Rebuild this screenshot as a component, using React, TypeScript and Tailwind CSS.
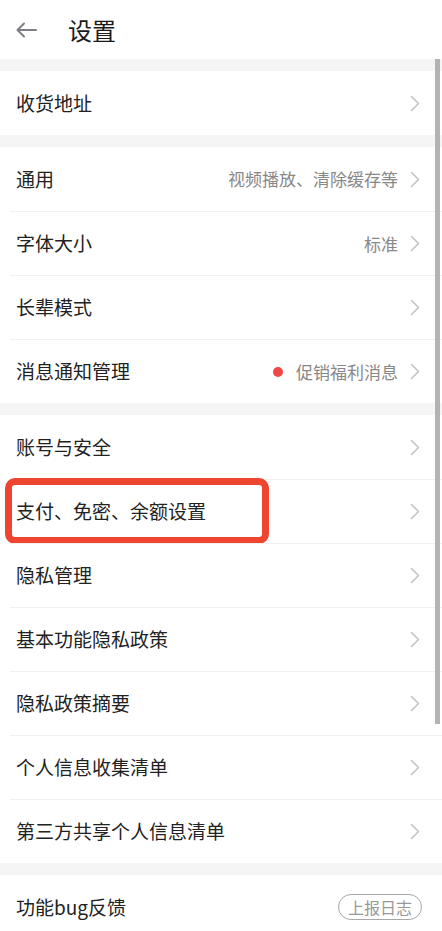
import React from "react";

type Row = {
  label: string;
  value?: string;
  dot?: boolean;
  highlight?: boolean;
};

const groups: Row[][] = [
  [{ label: "收货地址" }],
  [
    { label: "通用", value: "视频播放、清除缓存等" },
    { label: "字体大小", value: "标准" },
    { label: "长辈模式" },
    { label: "消息通知管理", value: "促销福利消息", dot: true },
  ],
  [
    { label: "账号与安全" },
    { label: "支付、免密、余额设置", highlight: true },
    { label: "隐私管理" },
    { label: "基本功能隐私政策" },
    { label: "隐私政策摘要" },
    { label: "个人信息收集清单" },
    { label: "第三方共享个人信息清单" },
  ],
];

function Chevron() {
  return (
    <svg width="10" height="17" viewBox="0 0 10 17" fill="none">
      <path
        d="M1.5 1.5 L8.5 8.5 L1.5 15.5"
        stroke="#c4c4c4"
        strokeWidth="1.6"
        strokeLinecap="round"
        strokeLinejoin="round"
      />
    </svg>
  );
}

function SettingRow({ row, first }: { row: Row; first: boolean }) {
  return (
    <div className="relative pl-[10px]">
      <div
        className={`flex h-[64px] items-center pl-[6px] pr-[22px] ${
          first ? "" : "border-t border-[#f0f0f0]"
        }`}
      >
        <span className="flex-1 text-[19px] text-[#222]">{row.label}</span>
        {row.dot && (
          <span className="mr-[13px] h-[10px] w-[10px] rounded-full bg-[#f04848]" />
        )}
        {row.value && (
          <span className="mr-[12px] text-[17px] text-[#888]">{row.value}</span>
        )}
        <Chevron />
      </div>
      {/* 红框标注 */}
      {row.highlight && (
        <div className="absolute left-[5px] top-[-1px] h-[66px] w-[264px] rounded-[10px] border-[7px] border-[#ee4430]" />
      )}
    </div>
  );
}

export default function App() {
  return (
    <div
      className="relative h-[931px] w-full overflow-hidden bg-[#f5f5f5]"
      style={{ fontFamily: '"Noto Sans CJK SC", "Noto Sans", sans-serif' }}
    >
      {/* Header */}
      <div className="flex h-[59px] items-center bg-white pl-[16px]">
        <svg width="21" height="16" viewBox="0 0 21 16" fill="none">
          <path
            d="M1.5 8 H20 M8 1.5 L1.5 8 L8 14.5"
            stroke="#7e7e86"
            strokeWidth="2"
            strokeLinecap="round"
            strokeLinejoin="round"
          />
        </svg>
        <span className="ml-[31px] text-[24px] text-[#1a1a1a]">设置</span>
      </div>

      <div className="flex flex-col gap-[12px] pt-[12px]">
        {groups.map((g, gi) => (
          <div key={gi} className="bg-white">
            {g.map((row, i) => (
              <SettingRow key={row.label} row={row} first={i === 0} />
            ))}
          </div>
        ))}

        <div className="flex h-[64px] items-center bg-white pl-[16px] pr-[20px]">
          <span className="flex-1 text-[19px] text-[#222]">功能bug反馈</span>
          <span className="flex h-[26px] w-[84px] items-center justify-center rounded-full border border-[#a8a8a8] text-[16px] text-[#999]">
            上报日志
          </span>
        </div>
      </div>

      {/* scrollbar */}
      <div className="absolute right-[2px] top-[59px] h-[665px] w-[5px] bg-[#b3b3b3]" />
    </div>
  );
}
